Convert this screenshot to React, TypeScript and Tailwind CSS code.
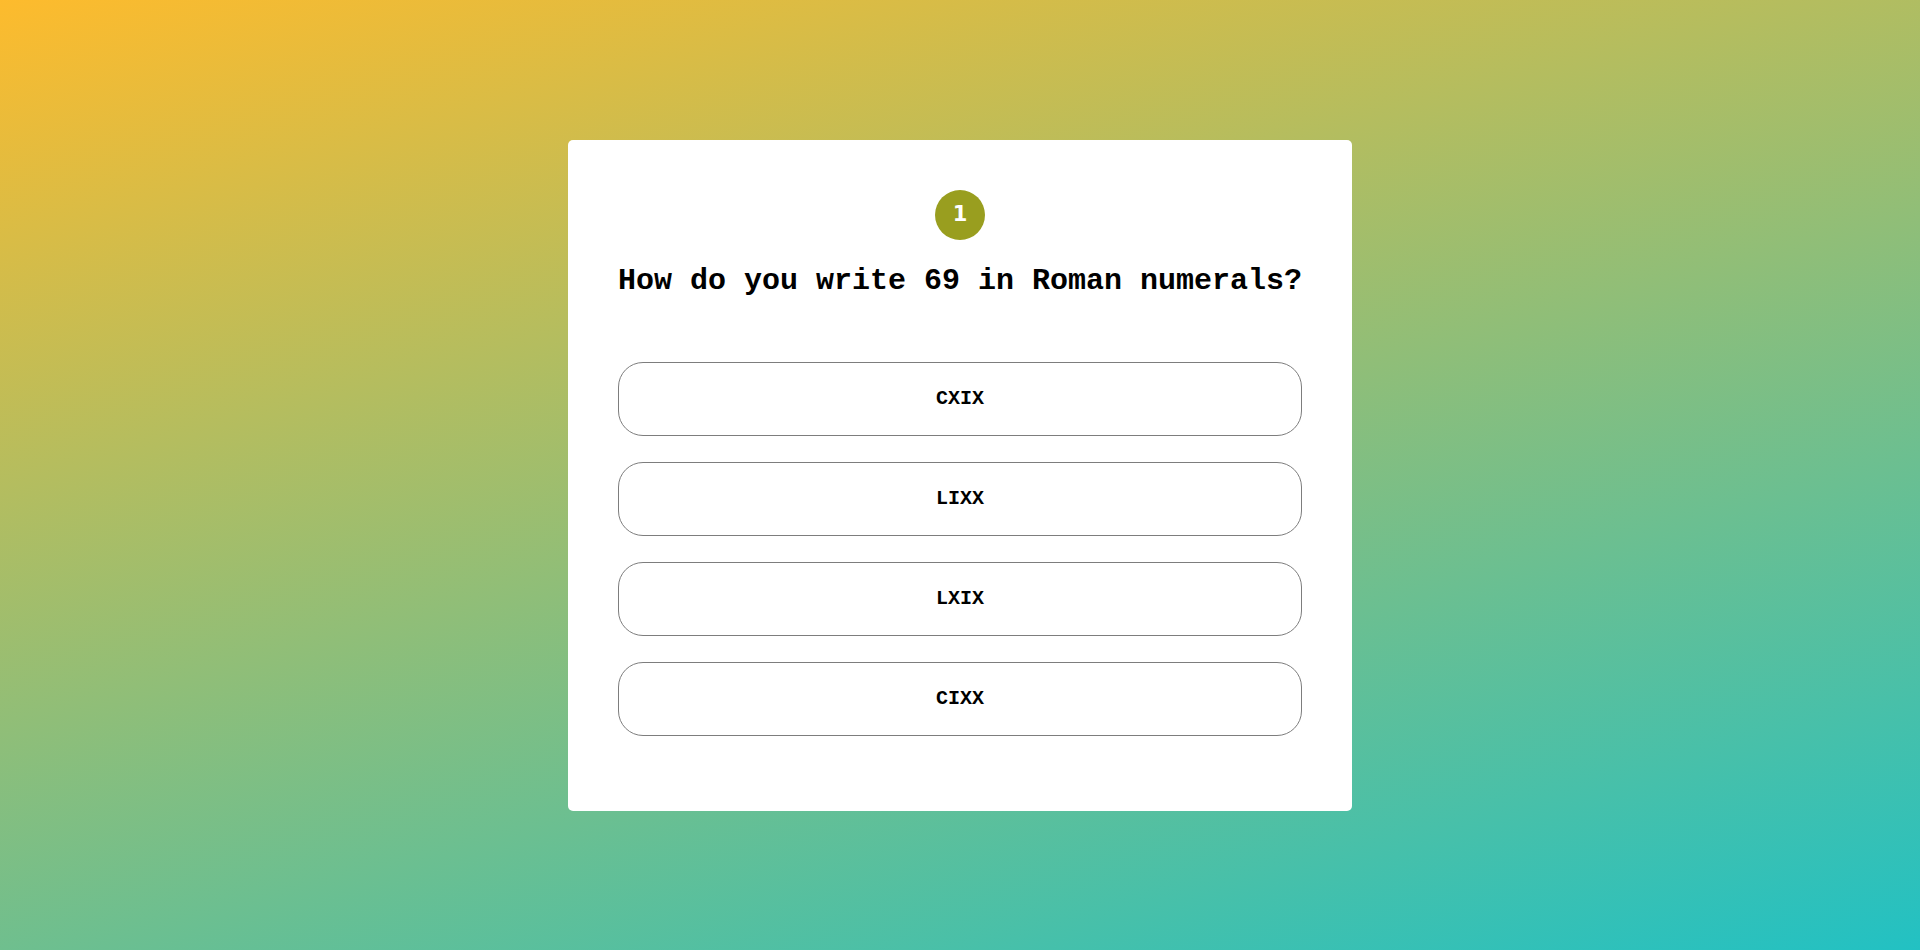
import React from "react";

const options = ["CXIX", "LIXX", "LXIX", "CIXX"];

export default function App() {
  return (
    <div className="flex h-[950px] w-full items-center justify-center bg-[linear-gradient(165deg,#fdbb2d,#22c1c3)]">
      <div className="flex w-[784px] flex-col items-center rounded-[5px] bg-white px-[50px] pt-[50px] pb-[50px]">
        <div className="flex h-[50px] w-[50px] items-center justify-center rounded-full bg-[#999e1f] font-['DejaVu_Sans',sans-serif] text-[21px] font-bold text-white">
          1
        </div>
        <h2 className="mt-[24px] mb-[64px] whitespace-nowrap text-center font-['Liberation_Mono',monospace] text-[30px] font-bold leading-[34px] text-black">
          How do you write 69 in Roman numerals?
        </h2>
        <div className="flex w-full flex-col">
          {options.map((o) => (
            <button
              key={o}
              className="mb-[26px] flex h-[74px] w-full items-center justify-center rounded-[25px] border border-[#7d7d7d] bg-white font-['Liberation_Mono',monospace] text-[20px] font-bold text-black last:mb-[25px]"
            >
              {o}
            </button>
          ))}
        </div>
      </div>
    </div>
  );
}
